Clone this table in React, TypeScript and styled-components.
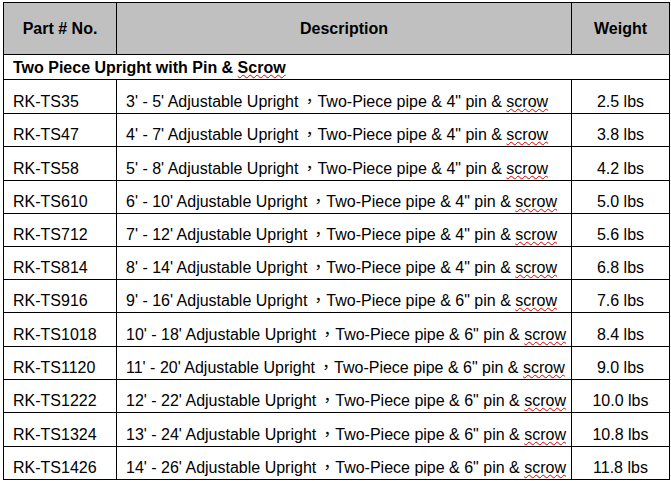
import React from 'react';
import styled, { createGlobalStyle } from 'styled-components';

const GlobalStyle = createGlobalStyle`
  html, body {
    margin: 0;
    padding: 0;
    background: #fff;
  }
  body {
    font-family: "Liberation Sans", Arial, sans-serif;
    color: #000;
  }
  * {
    box-sizing: border-box;
  }
`;

// Page wrapper, offsets the sheet a little like the original capture
const Page = styled.div`
  padding: 2px 0 0 3px;
`;

// the spreadsheet: cells draw right/bottom rules, the sheet draws left/top
const Sheet = styled.div`
  display: grid;
  width: 667px;
  grid-template-columns: 113px 455px 98px;
  grid-template-rows: 52px 25px 34px 33px 34px 33px 33px 33px 33px 34px 33px 33px 34px 33px;
  border-left: 1px solid #000;
  border-top: 1px solid #000;
  font-size: 16px;
  line-height: 18px;
`;

const HeadCell = styled.div`
  display: flex;
  align-items: center;
  justify-content: center;
  background: #c0c0c0;
  border-right: 1px solid #000;
  border-bottom: 1px solid #000;
  font-weight: bold;
`;

const SectionCell = styled.div`
  grid-column: 1 / -1;
  display: flex;
  align-items: flex-end;
  padding: 0 0 2px 9px;
  border-right: 1px solid #000;
  border-bottom: 1px solid #000;
  font-weight: bold;
`;

const Cell = styled.div<{ $center?: boolean }>`
  display: flex;
  align-items: flex-end;
  justify-content: ${({ $center }) => ($center ? 'center' : 'flex-start')};
  padding: 0 0 2px ${({ $center }) => ($center ? 0 : 9)}px;
  border-right: 1px solid #000;
  border-bottom: 1px solid #000;
  white-space: pre;
  overflow: hidden;
`;

// full-width comma, padded so it sits in the middle of the gap
const Comma = styled.span`
  font-family: "Noto Sans CJK TC", sans-serif;
  line-height: 18px;
  padding-left: 3px;
`;

// spell-check squiggle under the misspelt word
const Squiggle = styled.span`
  text-decoration: underline wavy #e00000;
  text-decoration-thickness: 1px;
  text-underline-offset: 1px;
`;

interface Item {
  part: string;
  range: string;
  pin: string;
  weight: string;
}

const items: Item[] = [
  { part: 'RK-TS35', range: "3' - 5'", pin: '4"', weight: '2.5 lbs' },
  { part: 'RK-TS47', range: "4' - 7'", pin: '4"', weight: '3.8 lbs' },
  { part: 'RK-TS58', range: "5' - 8'", pin: '4"', weight: '4.2 lbs' },
  { part: 'RK-TS610', range: "6' - 10'", pin: '4"', weight: '5.0 lbs' },
  { part: 'RK-TS712', range: "7' - 12'", pin: '4"', weight: '5.6 lbs' },
  { part: 'RK-TS814', range: "8' - 14'", pin: '4"', weight: '6.8 lbs' },
  { part: 'RK-TS916', range: "9' - 16'", pin: '6"', weight: '7.6 lbs' },
  { part: 'RK-TS1018', range: "10' - 18'", pin: '6"', weight: '8.4 lbs' },
  { part: 'RK-TS1120', range: "11' - 20'", pin: '6"', weight: '9.0 lbs' },
  { part: 'RK-TS1222', range: "12' - 22'", pin: '6"', weight: '10.0 lbs' },
  { part: 'RK-TS1324', range: "13' - 24'", pin: '6"', weight: '10.8 lbs' },
  { part: 'RK-TS1426', range: "14' - 26'", pin: '6"', weight: '11.8 lbs' },
];

const App = () => {
  return (
    <Page>
      <GlobalStyle />
      <Sheet>
        <HeadCell>Part # No.</HeadCell>
        <HeadCell>Description</HeadCell>
        <HeadCell>Weight</HeadCell>

        <SectionCell>
          <span>
            Two Piece Upright with Pin &amp; <Squiggle>Scrow</Squiggle>
          </span>
        </SectionCell>

        {items.map((it) => (
          <React.Fragment key={it.part}>
            <Cell>{it.part}</Cell>
            <Cell>
              <span>
                {it.range} Adjustable Upright<Comma lang="zh-TW">，</Comma>Two-Piece pipe &amp; {it.pin} pin &amp;{' '}
                <Squiggle>scrow</Squiggle>
              </span>
            </Cell>
            <Cell $center>{it.weight}</Cell>
          </React.Fragment>
        ))}
      </Sheet>
    </Page>
  );
};

export default App;
